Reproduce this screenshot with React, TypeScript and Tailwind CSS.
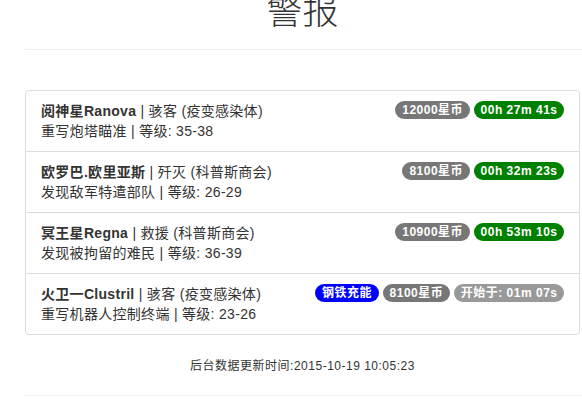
import React from 'react';

type Badge = { text: string; color: string };

type Alert = {
  planet: string;
  mission: string;
  faction: string;
  goal: string;
  level: string;
  badges: Badge[];
};

const alerts: Alert[] = [
  {
    planet: '阅神星Ranova',
    mission: '骇客',
    faction: '疫变感染体',
    goal: '重写炮塔瞄准',
    level: '35-38',
    badges: [
      { text: '12000星币', color: 'bg-[#777777]' },
      { text: '00h 27m 41s', color: 'bg-[#008000]' },
    ],
  },
  {
    planet: '欧罗巴.欧里亚斯',
    mission: '歼灭',
    faction: '科普斯商会',
    goal: '发现敌军特遣部队',
    level: '26-29',
    badges: [
      { text: '8100星币', color: 'bg-[#777777]' },
      { text: '00h 32m 23s', color: 'bg-[#008000]' },
    ],
  },
  {
    planet: '冥王星Regna',
    mission: '救援',
    faction: '科普斯商会',
    goal: '发现被拘留的难民',
    level: '36-39',
    badges: [
      { text: '10900星币', color: 'bg-[#777777]' },
      { text: '00h 53m 10s', color: 'bg-[#008000]' },
    ],
  },
  {
    planet: '火卫一Clustril',
    mission: '骇客',
    faction: '疫变感染体',
    goal: '重写机器人控制终端',
    level: '23-26',
    badges: [
      { text: '钢铁充能', color: 'bg-[#0000ff]' },
      { text: '8100星币', color: 'bg-[#777777]' },
      { text: '开始于: 01m 07s', color: 'bg-[#999999]' },
    ],
  },
];

const FONT = "font-['Liberation_Sans','Noto_Sans_CJK_SC',sans-serif]";

export default function App() {
  return (
    <div className={`w-[582px] h-[406px] overflow-hidden bg-white pl-[25px] text-[#333333] ${FONT}`}>
      <div className="w-[555px]">
        {/* Title */}
        <h1 className="-mt-[8px] text-center text-[36px] leading-[40px] font-light text-[#333333]">警报</h1>
        <div className="mt-[17px] w-[557px] border-t border-[#eeeeee]" />

        {/* Alert list */}
        <div className="mt-[40px] rounded-[4px] border border-[#dddddd]">
          {alerts.map((a, i) => (
            <div
              key={a.planet}
              className={`flex items-start justify-between px-[15px] py-[10px] text-[14px] leading-[20px] tracking-[0.3px] ${i > 0 ? 'border-t border-[#dddddd]' : ''}`}
            >
              <div>
                <p>
                  <b>{a.planet}</b> | {a.mission} ({a.faction})
                </p>
                <p>
                  {a.goal} | 等级: {a.level}
                </p>
              </div>
              <div className="flex gap-[4px]">
                {a.badges.map(b => (
                  <span
                    key={b.text}
                    className={`${b.color} rounded-[10px] pl-[7px] pr-[6.5px] py-[3px] text-[12px] leading-[12px] font-bold tracking-[0.5px] text-white whitespace-nowrap`}
                  >
                    {b.text}
                  </span>
                ))}
              </div>
            </div>
          ))}
        </div>

        {/* Footer */}
        <p className="mt-[23px] text-center text-[12px] leading-[17px] tracking-[0.5px]">后台数据更新时间:2015-10-19 10:05:23</p>
        <div className="mt-[20px] w-[557px] border-t border-[#eeeeee]" />
      </div>
    </div>
  );
}
